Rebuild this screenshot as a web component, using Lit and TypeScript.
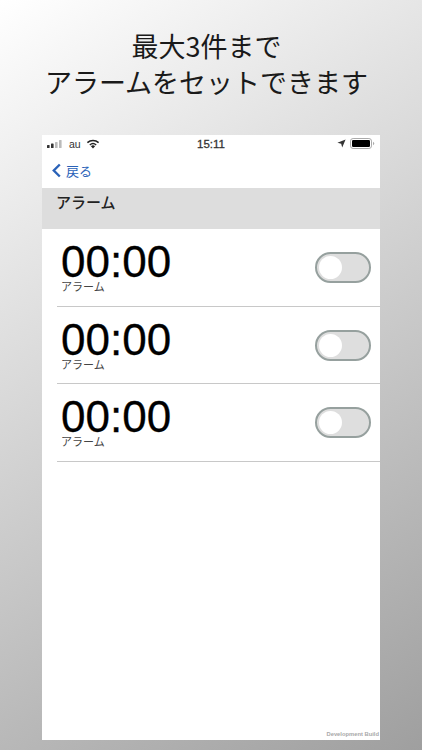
import { LitElement, html, css } from "lit";
import { customElement } from "lit/decorators.js";

@customElement("app-root")
export class AppRoot extends LitElement {
  static styles = css`
    :host {
      display: flex;
      flex-direction: column;
      align-items: center;
      width: 422px;
      height: 750px;
      overflow: hidden;
      box-sizing: border-box;
      background: linear-gradient(148deg, #ffffff 0%, #9f9f9f 100%);
      font-family: "Noto Sans CJK JP", "Liberation Sans", sans-serif;
    }
    .headline {
      margin: 28px 9px 0 0;
      height: 107px;
      font-size: 27px;
      line-height: 36px;
      font-weight: 400;
      color: #1a1a1a;
      text-align: center;
      white-space: nowrap;
    }
    .phone {
      position: relative;
      width: 338px;
      height: 605px;
      background: #fff;
      display: flex;
      flex-direction: column;
    }
    .status {
      height: 17px;
      padding: 0 5px 0 5px;
      display: flex;
      align-items: center;
      position: relative;
      font-family: "Liberation Sans", sans-serif;
      font-size: 10.5px;
      color: #333;
    }
    .left, .right { display: flex; align-items: center; }
    .left { gap: 5px; }
    .right { margin-left: auto; gap: 4px; }
    .time {
      position: absolute;
      left: 0;
      right: 0;
      text-align: center;
      font-size: 11.5px;
      font-weight: 400;
      -webkit-text-stroke: 0.3px #333;
      color: #333;
    }
    .nav {
      height: 36px;
      display: flex;
      align-items: center;
      gap: 4px;
      padding: 0 0 0 9px;
      box-sizing: border-box;
      color: #2a62b8;
      font-size: 13px;
    }
    .section {
      height: 41px;
      background: #dddddd;
      padding: 3px 0 0 14px;
      box-sizing: border-box;
      font-size: 15px;
      line-height: 22px;
      font-weight: 500;
      color: #222;
    }
    .row {
      height: 77.5px;
      margin-left: 15px;
      box-sizing: border-box;
      border-bottom: 1px solid #c8c8c8;
      padding: 13px 9px 0 4px;
      display: flex;
      justify-content: space-between;
    }
    .clock {
      font-family: "Liberation Sans", sans-serif;
      font-size: 44px;
      line-height: 39px;
      color: #000;
      -webkit-text-stroke: 0.3px #000;
    }
    .label {
      font-size: 11px;
      line-height: 11px;
      color: #444;
    }
    .toggle {
      width: 56px;
      height: 31px;
      margin-top: 10px;
      box-sizing: border-box;
      border: 2px solid #96a09e;
      border-radius: 16px;
      background: #dedede;
      padding: 2px;
    }
    .knob {
      width: 23px;
      height: 23px;
      border-radius: 50%;
      background: #fff;
    }
    .build {
      position: absolute;
      right: 1px;
      bottom: 3px;
      font-family: "Liberation Sans", sans-serif;
      font-size: 5.8px;
      font-weight: 700;
      color: #a8a8a8;
    }
  `;

  private renderRow() {
    return html`
      <div class="row">
        <div>
          <div class="clock">00:00</div>
          <div class="label">アラーム</div>
        </div>
        <div class="toggle"><div class="knob"></div></div>
      </div>
    `;
  }

  render() {
    return html`
      <div class="headline">最大3件まで<br />アラームをセットできます</div>
      <div class="phone">
        <div class="status">
          <div class="left">
            <svg width="17" height="8" viewBox="0 0 17 8">
              <rect x="0" y="5" width="2.6" height="3" rx="0.6" fill="#333" />
              <rect x="4" y="3.5" width="2.6" height="4.5" rx="0.6" fill="#333" />
              <rect x="8" y="2" width="2.6" height="6" rx="0.6" fill="#bbb" />
              <rect x="12" y="0" width="2.6" height="8" rx="0.6" fill="#bbb" />
            </svg>
            <span>au</span>
            <svg width="14" height="10" viewBox="0 0 14 10">
              <path d="M7 9.6 4.9 7.2a3.1 3.1 0 0 1 4.2 0Z" fill="#222" />
              <path d="M3.8 6a4.8 4.8 0 0 1 6.4 0" fill="none" stroke="#222" stroke-width="1.4" />
              <path d="M1.4 3.6a8.2 8.2 0 0 1 11.2 0" fill="none" stroke="#222" stroke-width="1.5" />
            </svg>
          </div>
          <div class="time">15:11</div>
          <div class="right">
            <svg width="9" height="9" viewBox="0 0 9 9">
              <path d="M8.6 0.4 0.4 3.8 4.2 4.8 5.2 8.6Z" fill="#333" />
            </svg>
            <svg width="25" height="11" viewBox="0 0 25 11">
              <rect x="0.5" y="0.5" width="21" height="10" rx="2.6" fill="none" stroke="#aaa" />
              <rect x="2" y="2" width="18" height="7" rx="1.2" fill="#000" />
              <path d="M23 3.8a1.8 1.8 0 0 1 0 3.4Z" fill="#aaa" />
            </svg>
          </div>
        </div>
        <div class="nav">
          <svg width="11" height="15" viewBox="0 0 11 15">
            <path d="M8.8 1.5 2.8 7.5 8.8 13.5" fill="none" stroke="#2a62b8" stroke-width="2.4" />
          </svg>
          <span>戻る</span>
        </div>
        <div class="section">アラーム</div>
        ${this.renderRow()}${this.renderRow()}${this.renderRow()}
        <div class="build">Development Build</div>
      </div>
    `;
  }
}
